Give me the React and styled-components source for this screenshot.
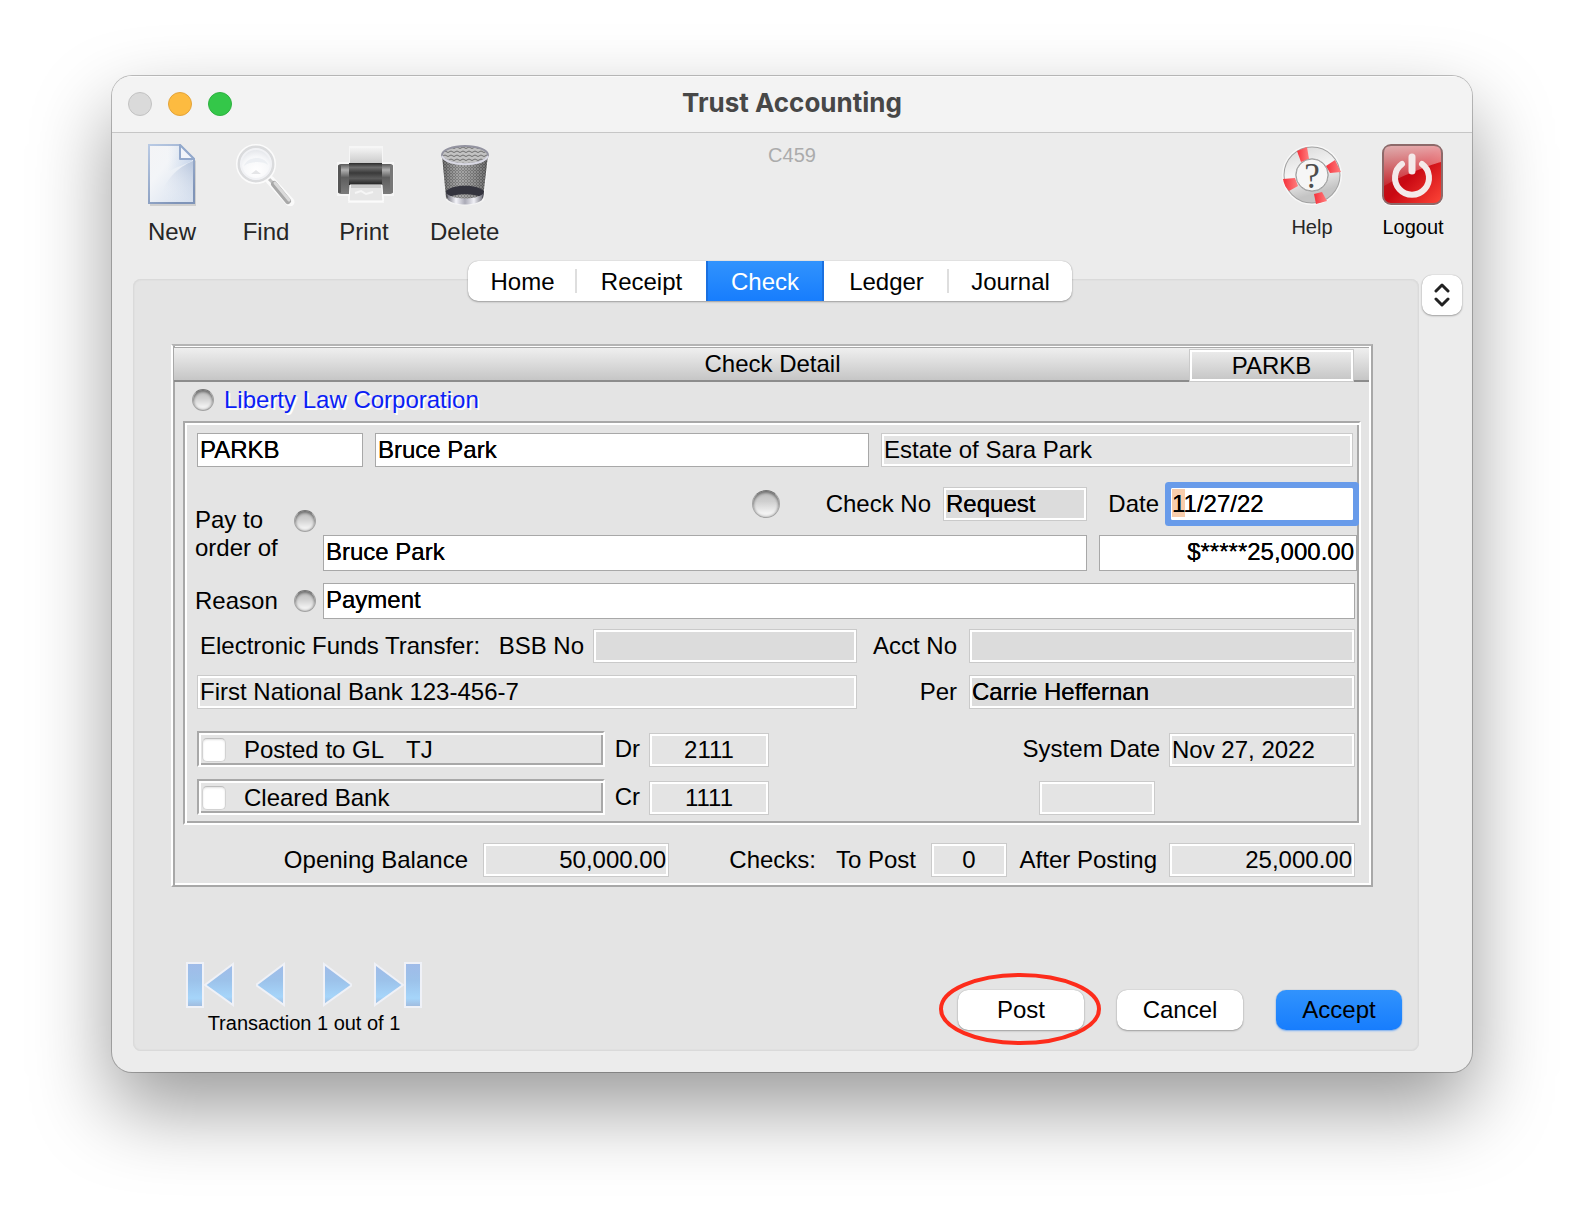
import React from "react";
import styled, { createGlobalStyle } from "styled-components";

const GlobalStyle = createGlobalStyle`
  * {
    box-sizing: border-box;
  }

  body {
    margin: 0;
    background: #fff;
    color: #000;
    font-family: "Liberation Sans", Arial, sans-serif;
    font-size: 24px;
    line-height: 28px;
  }

  button,
  input {
    margin: 0;
    font: inherit;
    color: inherit;
  }

  svg {
    display: block;
  }
`;

const Page = styled.div`
  padding: 76px 112px 148px;
`;

const Window = styled.main`
  overflow: hidden;
  border-radius: 20px;
  background: #ececec;
  box-shadow: 0 0 0 1px rgba(0, 0, 0, 0.24), 0 36px 80px rgba(0, 0, 0, 0.4);
`;

const TitleBar = styled.header`
  display: grid;
  grid-template-columns: 1fr auto 1fr;
  align-items: center;
  height: 57px;
  padding: 0 16px;
  border-bottom: 1px solid #c6c6c6;
  background: #f3f3f3;
  box-shadow: inset 0 1px 0 #fafafa;
`;

const Lights = styled.div`
  display: flex;
  gap: 16px;
`;

const Light = styled.button`
  width: 24px;
  height: 24px;
  padding: 0;
  border: 1px solid ${(props) => props.$edge};
  border-radius: 50%;
  background: ${(props) => props.$fill};
`;

const Title = styled.h1`
  margin: 0;
  padding-bottom: 2px;
  color: #474747;
  font-family: Inter, sans-serif;
  font-size: 26px;
  font-weight: 700;
  line-height: 32px;
`;

const Toolbar = styled.div`
  display: grid;
  grid-template-columns: 1fr auto 1fr;
  align-items: start;
  padding: 9px 27px 15px;
`;

const ToolGroup = styled.div`
  display: flex;
  gap: ${(props) => (props.$end ? "37px" : "34px")};
  justify-content: ${(props) => (props.$end ? "flex-end" : "flex-start")};
  padding-left: ${(props) => (props.$end ? "0" : "5px")};
`;

const ToolButton = styled.button`
  display: flex;
  flex-direction: column;
  align-items: center;
  gap: ${(props) => (props.$small ? "9px" : "12px")};
  padding: 0;
  border: 0;
  background: none;
  color: ${(props) => (props.$dark ? "#000" : "#262626")};
  font-size: ${(props) => (props.$small ? "20px" : "24px")};
  line-height: ${(props) => (props.$small ? "24px" : "28px")};
`;

const ScreenCode = styled.span`
  padding-top: 1px;
  color: #ababab;
  font-size: 20px;
  line-height: 24px;
`;

const TabRow = styled.nav`
  position: relative;
  z-index: 1;
  display: flex;
  justify-content: center;
  margin-bottom: -26px;
  padding-right: 44px;
`;

const Tabs = styled.div`
  display: grid;
  grid-template-columns: 109px 129px 118px 125px 123px;
  height: 40px;
  border-radius: 10px;
  background: #fff;
  box-shadow: 0 0 1px rgba(0, 0, 0, 0.3), 0 1px 2px rgba(0, 0, 0, 0.3);
`;

const Tab = styled.button`
  padding: 2px 0 0;
  border: 0;
  background: ${(props) =>
    props.$active
      ? "linear-gradient(#3193fd, #177dfd)"
      : props.$divider
        ? "linear-gradient(#dedede, #dedede) right center / 2px 24px no-repeat"
        : "none"};
  box-shadow: ${(props) =>
    props.$active ? "inset 2px 0 0 #1a70e0, inset -2px 0 0 #1a70e0" : "none"};
  color: ${(props) => (props.$active ? "#fff" : "#000")};
`;

const Body = styled.div`
  display: flex;
  align-items: flex-start;
  gap: 3px;
  padding: 0 10px 21px 21px;
`;

const Panel = styled.section`
  flex: 1;
  min-width: 0;
  margin-top: 4px;
  padding: 65px 17px 16px 38px;
  border-radius: 8px;
  background: #e4e4e4;
  box-shadow: inset 0 0 0 1px #dadada, inset 0 0 0 2px #e0e0e0;
`;

const Stepper = styled.button`
  display: grid;
  place-items: center;
  width: 40px;
  height: 40px;
  padding: 0;
  border: 0;
  border-radius: 10px;
  background: #fff;
  box-shadow: 0 0 1px rgba(0, 0, 0, 0.3), 0 1px 2px rgba(0, 0, 0, 0.3);
`;

const Detail = styled.div`
  margin-right: 29px;
  padding: 1px 2px 8px 1px;
  border: 2px solid #a8a8a8;
  border-top-color: #b4b4b4;
  border-left-color: #fff;
  box-shadow: inset 2px 0 0 #a8a8a8, inset 0 1px 0 #fff, inset -2px -2px 0 #fff;
`;

const DetailHeader = styled.div`
  display: grid;
  grid-template-columns: 1fr auto 1fr;
  align-items: start;
  justify-items: end;
  height: 35px;
  padding: 1px 15px 0 17px;
  border-top: 1px solid #a8a8a8;
  border-bottom: 2px solid #8c8c8c;
  background: linear-gradient(#efefef, #c6c6c6);
`;

const DetailTitle = styled.h2`
  grid-column: 2;
  margin: 1px 0 0;
  font-size: 24px;
  font-weight: 400;
  line-height: 28px;
`;

const FirmRow = styled.div`
  display: flex;
  align-items: center;
  gap: 10px;
  padding: 4px 18px 7px;
`;

const Firm = styled.span`
  color: #0b1ef5;
  text-shadow: 2px 2px 0 #fff;
`;

const Orb = styled.button`
  flex: none;
  width: ${(props) => (props.$large ? "28px" : "22px")};
  height: ${(props) => (props.$large ? "28px" : "22px")};
  padding: 0;
  border: 1px solid #a3a3a3;
  border-top-color: #757575;
  border-radius: 50%;
  background: linear-gradient(#bdbdbd, #cfcfcf 40%, #f3f3f3 85%);
  box-shadow: inset 0 2px 3px rgba(0, 0, 0, 0.35),
    inset 0 0 3px rgba(0, 0, 0, 0.3);
`;

const groove = `
  border: 2px solid #fff;
  border-top-color: #a8a8a8;
  border-left-color: #a8a8a8;
  box-shadow: inset 2px 2px 0 #fff, inset -2px -2px 0 #a8a8a8;
`;

const CheckForm = styled.div`
  ${groove}
  margin: 0 8px 0 9px;
  padding: 10px 2px 8px 12px;
`;

const Row = styled.div`
  display: flex;
  align-items: ${(props) => props.$align || "center"};
  gap: ${(props) => props.$gap || 0}px;
  margin-top: ${(props) => props.$top || 0}px;
  padding-right: ${(props) => (props.$end === undefined ? 2 : props.$end)}px;
`;

const Input = styled.input`
  flex: ${(props) => props.$grow || "none"};
  width: ${(props) => (props.$width ? `${props.$width}px` : "auto")};
  min-width: 0;
  height: ${(props) => (props.$tall ? "36px" : "34px")};
  padding: ${(props) => (props.$tall ? "0 2px 2px" : "0 2px")};
  border: 1px solid #a8a8a8;
  border-radius: 0;
  outline: 0;
  background: #fff;
  text-align: ${(props) => props.$align || "left"};
  text-shadow: 0 0 0 #000;
`;

const ReadOnlyInput = styled(Input)`
  border-color: #cacaca;
  background: ${(props) => (props.$shaded ? "#dcdcdc" : "transparent")};
  box-shadow: inset 0 0 0 2px #fff;
  text-shadow: ${(props) => (props.$shaded ? "0 0 0 #000" : "none")};
`;

const HeaderInput = styled(ReadOnlyInput)`
  height: 33px;
`;

// Focused field: ring around the box and the first character selected
const FocusedInput = styled(Input)`
  height: 32px;
  padding: 0;
  border-color: #fff;
  border-radius: 1px;
  background: linear-gradient(#f8cdac, #f8cdac) 0 0 / 13px 28px no-repeat, #fff;
  box-shadow: 0 0 0 6px #689bea;
`;

const Label = styled.label`
  flex: ${(props) => (props.$width ? "none" : "1")};
  align-self: center;
  width: ${(props) => (props.$width ? `${props.$width}px` : "auto")};
  padding-right: ${(props) => props.$pad || 12}px;
  text-align: right;
  white-space: nowrap;
`;

const Side = styled.div`
  display: flex;
  align-items: ${(props) => (props.$top ? "flex-start" : "center")};
  justify-content: space-between;
  flex: none;
  width: 128px;
  margin-left: -2px;
  padding: ${(props) => (props.$top ? "39px 7px 0 0" : "0 7px 0 0")};

  & > button {
    margin-top: ${(props) => (props.$top ? "4px" : "0")};
  }
`;

const Grow = styled.div`
  flex: 1;
  min-width: 0;
`;

const Transfer = styled.div`
  display: flex;
  align-items: center;
  flex: 1 1 660px;
  min-width: 0;
  padding-left: 3px;
`;

const CheckBox = styled.label`
  ${groove}
  display: flex;
  align-items: center;
  flex: none;
  width: 408px;
  height: 36px;
  padding: 2px 0 0 3px;

  input {
    appearance: none;
    width: 24px;
    height: 24px;
    margin-right: 18px;
    border: 1px solid #d2d2d2;
    border-top-color: #bdbdbd;
    border-radius: 5px;
    background: #fff;
    box-shadow: inset 0 1px 2px rgba(0, 0, 0, 0.12);
  }

  span {
    margin-left: 22px;
  }
`;

const BalanceRow = styled.div`
  display: flex;
  align-items: center;
  justify-content: flex-end;
  margin-top: 18px;
  padding-right: 14px;
`;

const ChecksText = styled.span`
  width: 157px;
  padding-right: 10px;
  text-align: right;
`;

const Footer = styled.footer`
  display: flex;
  align-items: flex-end;
  justify-content: space-between;
  margin-top: 74px;
  padding-left: 15px;
`;

const Pager = styled.div`
  text-align: center;
  font-size: 20px;
  line-height: 24px;
`;

const PagerRow = styled.div`
  display: flex;
  gap: 36px;
  margin-bottom: 2px;
`;

const PagerPair = styled.div`
  display: flex;
  gap: 22px;
`;

const PagerButton = styled.button`
  padding: 0;
  border: 0;
  background: none;
`;

const Actions = styled.div`
  display: flex;
  gap: 33px;
  margin-bottom: 5px;
`;

const ActionButton = styled.button`
  width: 126px;
  height: 40px;
  padding: 0;
  border: 0;
  border-radius: 10px;
  background: ${(props) =>
    props.$primary ? "linear-gradient(#3193fd, #177dfd)" : "#fff"};
  box-shadow: 0 0 1px rgba(0, 0, 0, 0.3),
    0 1px 2px ${(props) => (props.$primary ? "#7db4fa" : "rgba(0, 0, 0, 0.3)")};
`;

const Circled = styled.div`
  position: relative;

  svg {
    position: absolute;
    top: -17px;
    left: -19px;
    pointer-events: none;
  }
`;

const NewIcon = () => (
  <svg width="56" height="64" viewBox="0 0 56 64">
    <defs>
      <linearGradient id="page" x1="0" y1="0" x2="1" y2="1">
        <stop offset="0" stopColor="#f4f4f6" />
        <stop offset="0.35" stopColor="#f3f5f8" />
        <stop offset="1" stopColor="#d3deee" />
      </linearGradient>
      <linearGradient id="sweep" x1="1" y1="0" x2="0.3" y2="1">
        <stop offset="0" stopColor="#a9bad6" />
        <stop offset="1" stopColor="#eef2f8" stopOpacity="0" />
      </linearGradient>
      <linearGradient id="pageEdge" x1="0" y1="0" x2="0.6" y2="1">
        <stop offset="0" stopColor="#b9cae4" />
        <stop offset="1" stopColor="#7f94b8" />
      </linearGradient>
      <linearGradient id="fade" x1="0" y1="0" x2="1" y2="0">
        <stop offset="0" stopColor="#bfd0e8" stopOpacity="0" />
        <stop offset="1" stopColor="#b4c8e6" />
      </linearGradient>
    </defs>
    <path d="M6 4H37L52 19V64H6Z" fill="#000" opacity="0.12" />
    <path d="M5 3H36L50 17V61H5Z" fill="url(#page)" stroke="url(#pageEdge)" strokeWidth="2" />
    <path d="M49 19C34 25 20 38 14 60H49Z" fill="url(#sweep)" opacity="0.8" />
    <path d="M24 4H36V17H48V19C40 23 30 26 24 30Z" fill="url(#fade)" opacity="0.6" />
    <path d="M36 3V17H50Z" fill="#f2f5fa" stroke="#93a9cc" strokeWidth="2" strokeLinejoin="round" />
  </svg>
);

const FindIcon = () => (
  <svg width="64" height="64" viewBox="0 0 64 64">
    <defs>
      <radialGradient id="glass" cx="0.5" cy="0.7" r="0.6">
        <stop offset="0" stopColor="#fff" />
        <stop offset="0.7" stopColor="#f6f7f9" />
        <stop offset="1" stopColor="#e6e8ec" />
      </radialGradient>
    </defs>
    <path d="M36 38L56 60" stroke="#fafafa" strokeWidth="9" strokeLinecap="round" />
    <path d="M34 36L40 42" stroke="#c2c2c2" strokeWidth="3" />
    <path d="M40 42L54 59" stroke="#a8a8a8" strokeWidth="6" strokeLinecap="round" />
    <path d="M41 41L55 58" stroke="#dadada" strokeWidth="3" strokeLinecap="round" />
    <circle cx="22" cy="22" r="18" fill="none" stroke="#fbfbfb" strokeWidth="4" />
    <circle cx="22" cy="22" r="17" fill="url(#glass)" stroke="#dadbdd" strokeWidth="3" />
    <circle cx="22" cy="22" r="15" fill="none" stroke="#f1f2f5" strokeWidth="2" />
    <path d="M10 24C13 14 31 13 34 23C30 19 15 19 10 24Z" fill="#eceff3" />
    <path d="M17 32L22 28L27 32Z" fill="#e5e6e8" />
  </svg>
);

const PrintIcon = () => (
  <svg width="64" height="64" viewBox="0 0 64 64">
    <defs>
      <linearGradient id="paper" x1="0" y1="0" x2="0" y2="1">
        <stop offset="0" stopColor="#f3f3f3" />
        <stop offset="1" stopColor="#c6c6c6" />
      </linearGradient>
      <linearGradient id="roller" x1="0" y1="0" x2="0" y2="1">
        <stop offset="0" stopColor="#2b2b2b" />
        <stop offset="0.2" stopColor="#6e6e6e" />
        <stop offset="0.45" stopColor="#3a3a3a" />
        <stop offset="0.7" stopColor="#5c5c5c" />
        <stop offset="1" stopColor="#1f1f1f" />
      </linearGradient>
      <linearGradient id="casing" x1="0" y1="0" x2="0" y2="1">
        <stop offset="0" stopColor="#5a5a5a" />
        <stop offset="0.2" stopColor="#b0b0b0" />
        <stop offset="0.45" stopColor="#5e5e5e" />
        <stop offset="1" stopColor="#7c7c7c" />
      </linearGradient>
    </defs>
    <path d="M17 4H51V20H62V54H52V61H16V54H5V20H17Z" fill="#f6f6f6" />
    <rect x="18" y="6" width="32" height="17" fill="url(#paper)" />
    <rect x="6" y="22" width="55" height="30" rx="3" fill="url(#casing)" />
    <rect x="6" y="23" width="3" height="28" rx="1" fill="#555" />
    <rect x="58" y="23" width="3" height="28" rx="1" fill="#777" />
    <rect x="17" y="21" width="33" height="22" fill="url(#roller)" />
    <path d="M18 43H50L51 59H17Z" fill="#e6e6e6" stroke="#fff" />
    <path d="M19 43H49V46H19Z" fill="#c9c9c9" />
    <path d="M23 51L29 49L34 52L41 50" fill="none" stroke="#f6f6f6" strokeWidth="2" />
  </svg>
);

const DeleteIcon = () => (
  <svg width="64" height="64" viewBox="0 0 64 64">
    <defs>
      <pattern id="mesh" width="3" height="3" patternUnits="userSpaceOnUse">
        <rect width="3" height="3" fill="#6c6c6c" />
        <path d="M0 0L3 3M3 0L0 3" stroke="#959595" strokeWidth="1" />
      </pattern>
      <pattern id="rimMesh" width="6" height="4" patternUnits="userSpaceOnUse">
        <rect width="6" height="4" fill="#c2c2c2" />
        <path d="M0 1Q3 4 6 1" fill="none" stroke="#6e6e6e" strokeWidth="1" />
      </pattern>
      <linearGradient id="shade" x1="0" y1="0" x2="1" y2="0">
        <stop offset="0" stopColor="#000" stopOpacity="0.3" />
        <stop offset="0.4" stopColor="#fff" stopOpacity="0.15" />
        <stop offset="1" stopColor="#000" stopOpacity="0.3" />
      </linearGradient>
      <linearGradient id="foot" x1="0" y1="0" x2="1" y2="0">
        <stop offset="0" stopColor="#73737d" />
        <stop offset="0.25" stopColor="#f4f4fa" />
        <stop offset="0.5" stopColor="#aaaab6" />
        <stop offset="0.75" stopColor="#f0f0f6" />
        <stop offset="1" stopColor="#71717b" />
      </linearGradient>
    </defs>
    <path d="M8 12L13 58C18 65 46 65 51 58L56 12Z" fill="#f5f5f5" />
    <path d="M9 13L13 56C20 63 44 63 50 56L55 13Z" fill="url(#mesh)" />
    <path d="M9 13L13 56C20 63 44 63 50 56L55 13Z" fill="url(#shade)" />
    <path d="M13 49C20 42 44 42 51 49L50 56C42 51 22 51 14 56Z" fill="#34343e" />
    <path d="M14 52C22 58 42 58 50 52L49 58C42 64 22 64 15 58Z" fill="url(#foot)" />
    <ellipse cx="32" cy="13" rx="23" ry="9" fill="url(#rimMesh)" stroke="#9393a0" strokeWidth="2" />
    <path d="M9 14C14 25 50 25 55 14" fill="none" stroke="#d9d9e3" strokeWidth="2" />
  </svg>
);

const HelpIcon = () => (
  <svg width="64" height="64" viewBox="0 0 64 64">
    <defs>
      <linearGradient id="ring" x1="0" y1="0" x2="0.3" y2="1">
        <stop offset="0" stopColor="#dedede" />
        <stop offset="0.5" stopColor="#f6f6f6" />
        <stop offset="1" stopColor="#c4c4c4" />
      </linearGradient>
      <linearGradient id="band" x1="0" y1="0" x2="1" y2="0">
        <stop offset="0" stopColor="#f5303a" />
        <stop offset="1" stopColor="#ff7f7f" />
      </linearGradient>
    </defs>
    <circle cx="32" cy="33" r="30" fill="#f8f8f8" />
    <circle cx="32" cy="33" r="22" fill="none" stroke="#a2a2a2" strokeWidth="13" />
    <circle cx="32" cy="33" r="22" fill="none" stroke="url(#ring)" strokeWidth="11" />
    <path d="M17 9L27 5L29 17L21 20Z" fill="url(#band)" />
    <path d="M55 18L61 30L50 31L46 24Z" fill="url(#band)" />
    <path d="M3 37L15 36L18 44L9 49Q4 44 3 37Z" fill="url(#band)" />
    <path d="M34 52L42 50L47 59L36 62Z" fill="url(#band)" />
    <circle cx="32" cy="33" r="16" fill="#f6f6f6" stroke="#a0a0a0" strokeWidth="1" />
    <text x="32" y="46" textAnchor="middle" fontFamily="Liberation Serif, serif" fontSize="35" fill="#4c4c4c">
      ?
    </text>
  </svg>
);

const LogoutIcon = () => (
  <svg width="64" height="64" viewBox="0 0 64 64">
    <defs>
      <linearGradient id="red" x1="0" y1="0" x2="1" y2="1">
        <stop offset="0" stopColor="#a82a2c" />
        <stop offset="0.5" stopColor="#c90812" />
        <stop offset="1" stopColor="#ff4638" />
      </linearGradient>
      <linearGradient id="gloss" x1="0" y1="0" x2="0" y2="1">
        <stop offset="0" stopColor="#fff" stopOpacity="0.62" />
        <stop offset="1" stopColor="#fff" stopOpacity="0.1" />
      </linearGradient>
    </defs>
    <rect x="1" y="4" width="61" height="60" rx="9" fill="#fff" opacity="0.8" />
    <rect x="2" y="3" width="59" height="59" rx="8" fill="url(#red)" stroke="#8d6a6a" strokeWidth="2" />
    <path d="M3 11Q3 4 10 4H53Q60 4 60 11V20C46 24 20 34 3 44Z" fill="url(#gloss)" />
    <path d="M21 22A17 17 0 1 0 41 22" fill="none" stroke="#f4e9e9" strokeWidth="6" strokeLinecap="round" />
    <path d="M31 15V29" stroke="#f4e9e9" strokeWidth="7" strokeLinecap="round" />
  </svg>
);

const PagerIcon = ({ flip, bar }) => (
  <svg
    width={bar ? 48 : 30}
    height="48"
    viewBox={bar ? "0 0 48 48" : "19 0 30 48"}
    transform={flip ? "scale(-1 1)" : undefined}
  >
    <defs>
      <linearGradient id="blue" x1="0" y1="0" x2="0" y2="1">
        <stop offset="0" stopColor="#a0bbe8" />
        <stop offset="0.4" stopColor="#9cc2ea" />
        <stop offset="0.8" stopColor="#a6d5fa" />
        <stop offset="1" stopColor="#9fb9dc" />
      </linearGradient>
    </defs>
    {bar && <path d="M1 2H17V46H1Z" fill="url(#blue)" stroke="#eff1f7" strokeWidth="2" />}
    <path d="M47 3V44L19 24Z" fill="url(#blue)" stroke="#eff1f7" strokeWidth="2" />
  </svg>
);

const tools = [
  { title: "New", icon: <NewIcon /> },
  { title: "Find", icon: <FindIcon /> },
  { title: "Print", icon: <PrintIcon /> },
  { title: "Delete", icon: <DeleteIcon /> },
];

const tabs = [
  { title: "Home", divider: true },
  { title: "Receipt" },
  { title: "Check", active: true },
  { title: "Ledger", divider: true },
  { title: "Journal" },
];

const App = () => {
  return (
    <Page>
      <GlobalStyle />
      <Window>
        <TitleBar>
          <Lights>
            <Light aria-label="Close" $fill="#dadada" $edge="#c2c2c2" />
            <Light aria-label="Minimize" $fill="#fdbb40" $edge="#e3a33a" />
            <Light aria-label="Zoom" $fill="#34c749" $edge="#2eb140" />
          </Lights>
          <Title>Trust Accounting</Title>
        </TitleBar>

        <Toolbar>
          <ToolGroup>
            {tools.map((tool) => (
              <ToolButton key={tool.title}>
                {tool.icon}
                {tool.title}
              </ToolButton>
            ))}
          </ToolGroup>
          <ScreenCode>C459</ScreenCode>
          <ToolGroup $end>
            <ToolButton $small>
              <HelpIcon />
              Help
            </ToolButton>
            <ToolButton $small $dark>
              <LogoutIcon />
              Logout
            </ToolButton>
          </ToolGroup>
        </Toolbar>

        <TabRow>
          <Tabs>
            {tabs.map((tab) => (
              <Tab key={tab.title} $active={tab.active} $divider={tab.divider}>
                {tab.title}
              </Tab>
            ))}
          </Tabs>
        </TabRow>

        <Body>
          <Panel>
            <Detail>
              <DetailHeader>
                <DetailTitle>Check Detail</DetailTitle>
                <HeaderInput
                  aria-label="Matter code"
                  $width={165}
                  $align="center"
                  readOnly
                  value="PARKB"
                />
              </DetailHeader>
              <FirmRow>
                <Orb aria-label="Select firm" />
                <Firm>Liberty Law Corporation</Firm>
              </FirmRow>

              <CheckForm>
                <Row $gap={12} $end={4}>
                  <Input aria-label="Matter" $width={166} defaultValue="PARKB" />
                  <Input aria-label="Client" $grow="1 1 494px" defaultValue="Bruce Park" />
                  <ReadOnlyInput
                    aria-label="Description"
                    $grow="1 1 472px"
                    readOnly
                    value="Estate of Sara Park"
                  />
                </Row>

                <Row $align="flex-start" $end={0}>
                  <Side $top>
                    <label htmlFor="payee">
                      Pay to
                      <br />
                      order of
                    </label>
                    <Orb aria-label="Look up payee" />
                  </Side>
                  <Grow>
                    <Row $top={20} $end={4}>
                      <Grow />
                      <Orb aria-label="Look up check" $large />
                      <Label htmlFor="checkNo" $width={163}>
                        Check No
                      </Label>
                      <ReadOnlyInput id="checkNo" $width={144} $shaded readOnly value="Request" />
                      <Label htmlFor="date" $width={84}>
                        Date
                      </Label>
                      <FocusedInput id="date" $width={182} defaultValue="11/27/22" />
                    </Row>
                    <Row $top={14} $gap={12} $end={0}>
                      <Input id="payee" $grow="1" $tall defaultValue="Bruce Park" />
                      <Input
                        aria-label="Amount"
                        $width={258}
                        $tall
                        $align="right"
                        defaultValue="$*****25,000.00"
                      />
                    </Row>
                  </Grow>
                </Row>

                <Row $top={12}>
                  <Side>
                    <label htmlFor="reason">Reason</label>
                    <Orb aria-label="Look up reason" />
                  </Side>
                  <Input id="reason" $grow="1" $tall defaultValue="Payment" />
                </Row>

                <Row $top={10}>
                  <Transfer>
                    <span>Electronic Funds Transfer:</span>
                    <Label htmlFor="bsb" $pad={9}>
                      BSB No
                    </Label>
                    <ReadOnlyInput id="bsb" $width={264} $shaded readOnly value="" />
                  </Transfer>
                  <Label htmlFor="acct" $width={112}>
                    Acct No
                  </Label>
                  <ReadOnlyInput id="acct" $grow="1 1 386px" $shaded readOnly value="" />
                </Row>

                <Row $top={12}>
                  <ReadOnlyInput
                    aria-label="Bank"
                    $grow="1 1 660px"
                    readOnly
                    value="First National Bank 123-456-7"
                  />
                  <Label htmlFor="per" $width={112}>
                    Per
                  </Label>
                  <ReadOnlyInput
                    id="per"
                    $grow="1 1 386px"
                    $shaded
                    readOnly
                    value="Carrie Heffernan"
                  />
                </Row>

                <Row $top={22} $align="flex-end">
                  <CheckBox>
                    <input type="checkbox" />
                    Posted to GL <span>TJ</span>
                  </CheckBox>
                  <Label htmlFor="dr" $width={44} $pad={9}>
                    Dr
                  </Label>
                  <ReadOnlyInput id="dr" $width={120} $align="center" readOnly value="2111" />
                  <Label htmlFor="sysDate" $pad={9}>
                    System Date
                  </Label>
                  <ReadOnlyInput id="sysDate" $width={186} readOnly value="Nov 27, 2022" />
                </Row>

                <Row $top={12} $align="flex-end" $end={202}>
                  <CheckBox>
                    <input type="checkbox" />
                    Cleared Bank
                  </CheckBox>
                  <Label htmlFor="cr" $width={44} $pad={9}>
                    Cr
                  </Label>
                  <ReadOnlyInput id="cr" $width={120} $align="center" readOnly value="1111" />
                  <Grow />
                  <ReadOnlyInput aria-label="Cleared date" $width={116} readOnly value="" />
                </Row>
              </CheckForm>

              <BalanceRow>
                <Label htmlFor="opening" $pad={15}>
                  Opening Balance
                </Label>
                <ReadOnlyInput
                  id="opening"
                  $width={186}
                  $align="right"
                  readOnly
                  value="50,000.00"
                />
                <ChecksText>Checks:</ChecksText>
                <Label htmlFor="toPost" $width={105} $pad={15}>
                  To Post
                </Label>
                <ReadOnlyInput id="toPost" $width={76} $align="center" readOnly value="0" />
                <Label htmlFor="after" $width={162}>
                  After Posting
                </Label>
                <ReadOnlyInput
                  id="after"
                  $width={186}
                  $align="right"
                  readOnly
                  value="25,000.00"
                />
              </BalanceRow>
            </Detail>

            <Footer>
              <Pager>
                <PagerRow>
                  <PagerPair>
                    <PagerButton aria-label="First">
                      <PagerIcon bar />
                    </PagerButton>
                    <PagerButton aria-label="Previous">
                      <PagerIcon />
                    </PagerButton>
                  </PagerPair>
                  <PagerPair>
                    <PagerButton aria-label="Next">
                      <PagerIcon flip />
                    </PagerButton>
                    <PagerButton aria-label="Last">
                      <PagerIcon flip bar />
                    </PagerButton>
                  </PagerPair>
                </PagerRow>
                Transaction 1 out of 1
              </Pager>
              <Actions>
                <Circled>
                  <ActionButton>Post</ActionButton>
                  <svg width="162" height="74" viewBox="0 0 162 74">
                    <ellipse cx="81" cy="36" rx="79" ry="34" fill="none" stroke="#fd2c1b" strokeWidth="4" />
                  </svg>
                </Circled>
                <ActionButton>Cancel</ActionButton>
                <ActionButton $primary>Accept</ActionButton>
              </Actions>
            </Footer>
          </Panel>

          <Stepper aria-label="Change record">
            <svg width="16" height="24" viewBox="0 0 16 24" fill="none" stroke="#222" strokeWidth="3" strokeLinecap="round" strokeLinejoin="round">
              <path d="M2 8L8 2L14 8M2 16L8 22L14 16" />
            </svg>
          </Stepper>
        </Body>
      </Window>
    </Page>
  );
};

export default App;
